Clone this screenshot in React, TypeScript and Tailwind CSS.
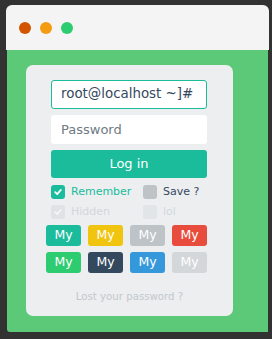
import React from "react";

const Check = ({ color }: { color: string }) => (
  <svg width="10" height="10" viewBox="0 0 10 10" fill="none">
    <path d="M2.2 5.2 L4.2 7.2 L7.8 3" stroke={color} strokeWidth="1.8" strokeLinecap="round" strokeLinejoin="round" />
  </svg>
);

export default function App() {
  const btns = [
    "bg-[#1abc9c]",
    "bg-[#f1c40f]",
    "bg-[#bdc3c7]",
    "bg-[#e74c3c]",
    "bg-[#2ecc71]",
    "bg-[#34495e]",
    "bg-[#3498db]",
    "bg-[#d3d7da]",
  ];
  return (
    <div className="w-[272px] h-[339px] bg-[#323232] pt-[5px] pl-[6px]" style={{ fontFamily: '"DejaVu Sans", Verdana, sans-serif' }}>
      <div className="w-[263px] h-[45px] bg-[#f4f4f4] rounded-t-[6px] flex items-center pl-[13px] gap-[9px]">
        <div className="w-[12px] h-[12px] rounded-full bg-[#d35400]" />
        <div className="w-[12px] h-[12px] rounded-full bg-[#f39c12]" />
        <div className="w-[12px] h-[12px] rounded-full bg-[#2ecc71]" />
      </div>
      <div className="ml-[1px] w-[261px] h-[282px] bg-[#5bc978] rounded-bl-[3px] pt-[15px] pl-[19px]">
        <div className="w-[207px] h-[251px] bg-[#eceef0] rounded-[7px] pt-[15px] flex flex-col">
          <div className="pl-[25px] flex flex-col">
            <div className="w-[156px] h-[29px] bg-white border border-[#1abc9c] rounded-[3px] flex items-center pl-[9px] text-[13.4px] text-[#34495e]">
              root@localhost ~]#
            </div>
            <div className="mt-[6px] w-[156px] h-[29px] bg-white rounded-[3px] flex items-center pl-[10px] text-[13px] text-[#6f7a82]">
              Password
            </div>
            <div className="mt-[6px] w-[156px] h-[28px] bg-[#1abc9c] rounded-[3px] flex items-center justify-center text-[13px] text-white">
              Log in
            </div>
            <div className="mt-[7px] flex h-[14px] items-center text-[11px]">
              <div className="w-[92px] flex items-center">
                <div className="w-[14px] h-[14px] rounded-[3px] bg-[#1abc9c] flex items-center justify-center">
                  <Check color="#ffffff" />
                </div>
                <span className="ml-[6px] text-[#1abc9c]">Remember</span>
              </div>
              <div className="flex items-center">
                <div className="w-[14px] h-[14px] rounded-[3px] bg-[#bdc3c7]" />
                <span className="ml-[6px] text-[#34495e]">Save ?</span>
              </div>
            </div>
            <div className="mt-[6px] flex h-[14px] items-center text-[11px]">
              <div className="w-[92px] flex items-center">
                <div className="w-[14px] h-[14px] rounded-[3px] bg-[#e0e3e5] flex items-center justify-center">
                  <Check color="#f3f4f5" />
                </div>
                <span className="ml-[6px] text-[#d3d7da]">Hidden</span>
              </div>
              <div className="flex items-center">
                <div className="w-[14px] h-[14px] rounded-[3px] bg-[#e2e5e7]" />
                <span className="ml-[6px] text-[#d3d7da]">lol</span>
              </div>
            </div>
          </div>
          <div className="pl-[20px] mt-[6px] grid grid-cols-[35px_35px_35px_35px] gap-x-[7px] gap-y-[6px]">
            {btns.map((b, i) => (
              <div key={i} className={`${b} h-[21px] rounded-[3px] flex items-center justify-center text-[12.5px] text-white`}>
                My
              </div>
            ))}
          </div>
          <div className="mt-[16px] text-center text-[10.2px] text-[#c3c8cc]">
            Lost your password ?
          </div>
        </div>
      </div>
    </div>
  );
}
